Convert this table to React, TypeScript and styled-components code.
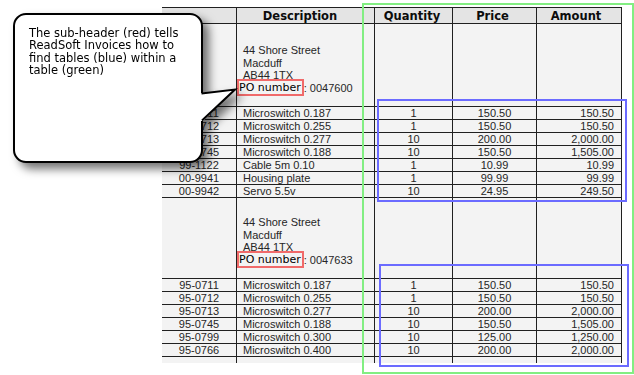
import React from "react";
import styled, { createGlobalStyle } from "styled-components";

const GlobalStyle = createGlobalStyle`
  html, body { margin: 0; padding: 0; background: #ffffff; }
  #root { width: 634px; height: 375px; }
`;

const COLS = "75px 138px 78px 84px 85px";
const LINE = "#202020";

const Page = styled.div`
  position: relative;
  width: 634px;
  height: 375px;
  overflow: hidden;
  background: #ffffff;
  box-sizing: border-box;
  padding: 7px 0 0 162px;
`;

const Doc = styled.div`
  width: 460px;
  display: flex;
  flex-direction: column;
  background: #f3f3f3;
  font-family: "Liberation Sans", Arial, sans-serif;
  font-size: 11px;
  color: #262626;
`;

const Row = styled.div<{ $h: number; $line?: boolean; $head?: boolean }>`
  display: grid;
  grid-template-columns: ${COLS};
  height: ${(p) => p.$h}px;
  box-sizing: border-box;
  border-top: ${(p) => (p.$head ? `1px solid ${LINE}` : "none")};
  border-bottom: ${(p) => (p.$line ? `1px solid ${LINE}` : "none")};
  background: ${(p) => (p.$head ? "#e4e4e4" : "transparent")};
`;

type Align = "left" | "center" | "right";

const Cell = styled.div<{ $align?: Align }>`
  border-right: 1px solid ${LINE};
  display: flex;
  align-items: center;
  justify-content: ${(p) =>
    p.$align === "left" ? "flex-start" : p.$align === "right" ? "flex-end" : "center"};
  padding: 0 ${(p) => (p.$align === "right" ? 7 : 0)}px 0 ${(p) => (p.$align === "left" ? 6 : 0)}px;
  line-height: 12px;
  white-space: nowrap;
  overflow: hidden;
`;

const HeadCell = styled(Cell)<{ $pr?: number }>`
  font-family: "DejaVu Sans", Verdana, sans-serif;
  font-weight: bold;
  font-size: 11.5px;
  color: #0c0c0c;
  padding-right: ${(p) => p.$pr ?? 0}px;
`;

const BlockCell = styled(Cell)`
  align-items: flex-end;
  justify-content: flex-start;
  padding-left: 6px;
  overflow: visible;
`;

const Address = styled.div`
  display: flex;
  flex-direction: column;
  align-items: flex-start;
  padding-bottom: 10px;
`;

const AddrLine = styled.div`
  height: 12.5px;
  line-height: 12.5px;
`;

const PoLine = styled.div`
  display: flex;
  align-items: center;
  height: 17px;
  margin: -2.5px 0 0 -6px;
`;

const PoBox = styled.span`
  display: inline-flex;
  align-items: center;
  height: 17px;
  box-sizing: border-box;
  border: 2px solid #f06a6a;
  padding: 0 1px 0 0;
  font-family: "DejaVu Sans", Verdana, sans-serif;
  font-size: 11px;
  color: #000;
  line-height: 13px;
`;

const Frame = styled.div<{ $color: string; $x: number; $y: number; $w: number; $h: number }>`
  position: absolute;
  left: ${(p) => p.$x}px;
  top: ${(p) => p.$y}px;
  width: ${(p) => p.$w}px;
  height: ${(p) => p.$h}px;
  box-sizing: border-box;
  border: 2px solid ${(p) => p.$color};
  pointer-events: none;
`;

const Callout = styled.div`
  position: absolute;
  left: 13px;
  top: 13px;
  width: 190px;
  height: 150px;
  filter: drop-shadow(6px 6px 5px rgba(0, 0, 0, 0.55));
  z-index: 5;
`;

const Bubble = styled.div`
  width: 100%;
  height: 100%;
  box-sizing: border-box;
  border: 2px solid #000;
  border-radius: 13px;
  background: #fff;
  padding: 12px 0 0 14px;
`;

const BubbleText = styled.p`
  margin: 0;
  width: 164px;
  font-family: "DejaVu Sans", Verdana, sans-serif;
  font-size: 11.5px;
  line-height: 12.3px;
  color: #000;
`;

const Tail = styled.svg`
  position: absolute;
  left: 185px;
  top: 74px;
  width: 40px;
  height: 38px;
  overflow: visible;
`;

type Item = [string, string, string, string, string];

const block1: Item[] = [
  ["95-0711", "Microswitch 0.187", "1", "150.50", "150.50"],
  ["95-0712", "Microswitch 0.255", "1", "150.50", "150.50"],
  ["95-0713", "Microswitch 0.277", "10", "200.00", "2,000.00"],
  ["95-0745", "Microswitch 0.188", "10", "150.50", "1,505.00"],
  ["99-1122", "Cable 5m 0.10", "1", "10.99", "10.99"],
  ["00-9941", "Housing plate", "1", "99.99", "99.99"],
  ["00-9942", "Servo 5.5v", "10", "24.95", "249.50"],
];

const block2: Item[] = [
  ["95-0711", "Microswitch 0.187", "1", "150.50", "150.50"],
  ["95-0712", "Microswitch 0.255", "1", "150.50", "150.50"],
  ["95-0713", "Microswitch 0.277", "10", "200.00", "2,000.00"],
  ["95-0745", "Microswitch 0.188", "10", "150.50", "1,505.00"],
  ["95-0799", "Microswitch 0.300", "10", "125.00", "1,250.00"],
  ["95-0766", "Microswitch 0.400", "10", "200.00", "2,000.00"],
];

const ItemRow = ({ item }: { item: Item }) => (
  <Row $h={13} $line>
    <Cell>{item[0]}</Cell>
    <Cell $align="left">{item[1]}</Cell>
    <Cell>{item[2]}</Cell>
    <Cell>{item[3]}</Cell>
    <Cell $align="right">{item[4]}</Cell>
  </Row>
);

const SubHeader = ({ h, po }: { h: number; po: string }) => (
  <Row $h={h} $line>
    <Cell />
    <BlockCell>
      <Address>
        <AddrLine>44 Shore Street</AddrLine>
        <AddrLine>Macduff</AddrLine>
        <AddrLine>AB44 1TX</AddrLine>
        <PoLine>
          <PoBox>PO number</PoBox>
          <span>: {po}</span>
        </PoLine>
      </Address>
    </BlockCell>
    <Cell />
    <Cell />
    <Cell />
  </Row>
);

export default function App() {
  return (
    <>
      <GlobalStyle />
      <Page>
        <Doc>
          <Row $h={17} $head $line>
            <HeadCell />
            <HeadCell $pr={11}>Description</HeadCell>
            <HeadCell $pr={3}>Quantity</HeadCell>
            <HeadCell $pr={4}>Price</HeadCell>
            <HeadCell $pr={6}>Amount</HeadCell>
          </Row>
          <SubHeader h={83} po="0047600" />
          {block1.map((it, i) => (
            <ItemRow key={"a" + i} item={it} />
          ))}
          <SubHeader h={81} po="0047633" />
          {block2.map((it, i) => (
            <ItemRow key={"b" + i} item={it} />
          ))}
          <Row $h={6}>
            <Cell />
            <Cell />
            <Cell />
            <Cell />
            <Cell />
          </Row>
        </Doc>

        <Frame $color="#82ee82" $x={362} $y={3} $w={272} $h={371} />
        <Frame $color="#6b6bff" $x={377} $y={99} $w={250} $h={103} />
        <Frame $color="#6b6bff" $x={379} $y={264} $w={250} $h={103} />

        <Callout>
          <Bubble>
            <BubbleText>
              The sub-header (red) tells ReadSoft Invoices how to find tables (blue) within a table (green)
            </BubbleText>
          </Bubble>
          <Tail viewBox="0 0 40 38">
            <polygon points="-3,6 4,6 37,2.5 5,34 -3,34" fill="#fff" />
            <polyline
              points="3.5,6.5 37,2.5 4,33.5"
              fill="none"
              stroke="#000"
              strokeWidth="2"
              strokeLinejoin="miter"
            />
          </Tail>
        </Callout>
      </Page>
    </>
  );
}
